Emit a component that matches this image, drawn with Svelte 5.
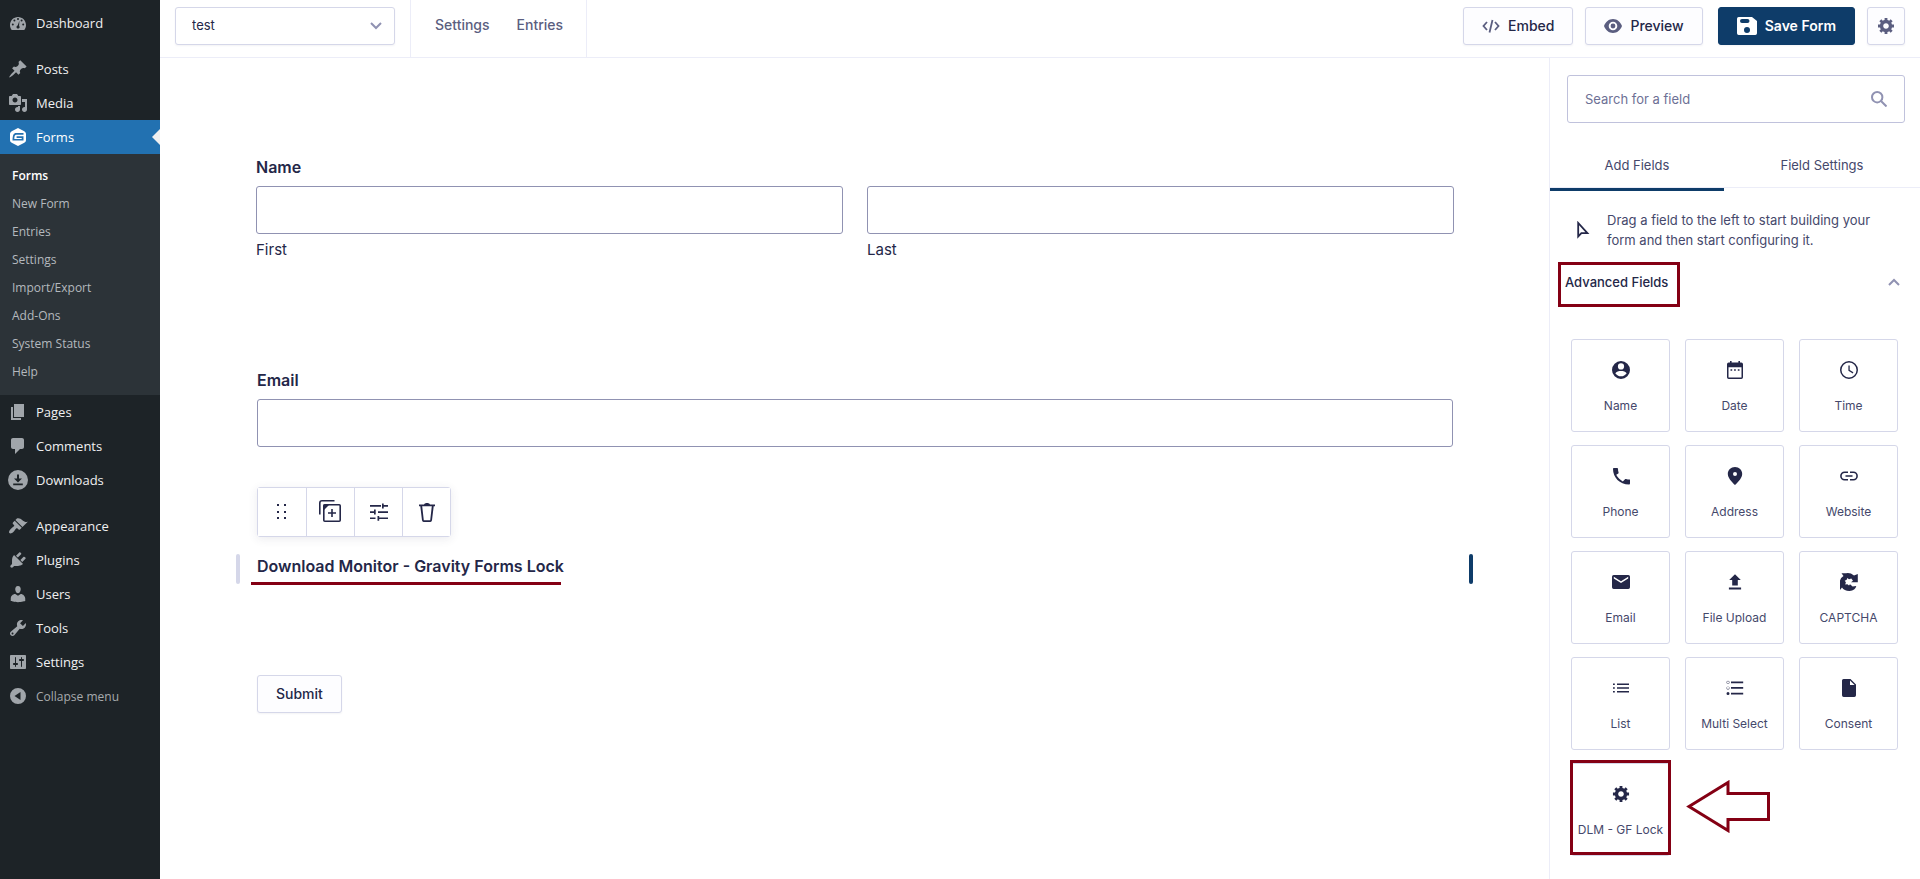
<script lang="ts">
  interface MenuItem {
    label: string;
    icon: string;
    current?: boolean;
    gapBefore?: boolean;
  }

  // 20x20 admin menu glyphs
  const menuIcons: Record<string, string> = {
    dashboard:
      'M3.76 17h12.48c1.1-1.37 1.76-3.11 1.76-5 0-4.42-3.58-8-8-8s-8 3.58-8 8c0 1.89.66 3.63 1.76 5zM10 5a1 1 0 110 2 1 1 0 010-2zM6.4 6.6a1 1 0 110 2 1 1 0 010-2zM13.6 6.6a1 1 0 110 2 1 1 0 010-2zM4.8 10.4a1 1 0 110 2 1 1 0 010-2zM15.2 10.4a1 1 0 110 2 1 1 0 010-2zM11.4 7.8l-.3 5.1c.5.4.7 1 .5 1.6-.3.9-1.200 1.300-2 1-.9-.3-1.300-1.200-1-2 .2-.5.600-.8 1.100-.9z',
    posts:
      'M10.44 3.02l1.82-1.82 6.36 6.35-1.83 1.82c-1.05-.68-2.48-.57-3.41.36l-.75.75c-.92.93-1.04 2.35-.35 3.41l-1.83 1.82-2.41-2.41-2.8 2.79c-.42.42-3.38 2.71-3.8 2.29s1.86-3.39 2.28-3.81l2.79-2.79L4.1 9.36l1.83-1.82c1.05.69 2.48.57 3.4-.36l.75-.75c.93-.92 1.05-2.35.36-3.41z',
    media:
      'M13 11V4c0-.55-.45-1-1-1h-1.67L9 1H5L3.67 3H2c-.55 0-1 .45-1 1v7c0 .55.45 1 1 1h10c.55 0 1-.45 1-1zM7 4.500c1.380 0 2.500 1.120 2.500 2.500S8.380 9.500 7 9.500 4.500 8.380 4.500 7 5.620 4.500 7 4.500zM14 6h5v10.500c0 1.380-1.120 2.500-2.500 2.500S14 17.880 14 16.500s1.120-2.500 2.500-2.500c.17 0 .34.02.5.05V9h-3V6zm-4 8.050V13h2v3.500c0 1.380-1.120 2.500-2.500 2.500S7 17.880 7 16.500 8.120 14 9.500 14c.17 0 .34.02.5.05z',
    forms:
      'M10 1l6.300 3.200q1.700 1 1.700 2.600v6.400q0 1.600-1.700 2.600L10 19l-6.300-3.200Q2 14.800 2 13.200V6.800q0-1.600 1.700-2.600zM15.500 6H8.200C5.400 6 4.700 8.300 4.500 13.500h11V9.200H8.600v1.700h5.100v1H6.300c.1-2.800.5-4.200 2.100-4.200h7.100z',
    pages: 'M6 15V2h10v13H6zm-1 1h8v2H3V5h2v11z',
    comments:
      'M5 2h9c1.100 0 2 .9 2 2v7c0 1.100-.9 2-2 2h-2l-5 5v-5H5c-1.100 0-2-.9-2-2V4c0-1.100.9-2 2-2z',
    downloads:
      'M10 0a10 10 0 110 20 10 10 0 010-20zM9 4.500v4H6l4 4 4-4h-3v-4zM5.200 13.500v1.700h9.600v-1.700z',
    appearance:
      'M14.480 11.060L7.410 3.990l1.500-1.500c.5-.56 2.300-.47 3.510.32 1.210.8 1.430 1.280 2.910 2.100 1.180.64 2.450 1.260 4.450.85zm-.71.71L6.700 4.700 4.930 6.470c-.39.39-.39 1.020 0 1.410l1.060 1.060c.39.39.39 1.030 0 1.420-.6.6-1.430 1.110-2.210 1.690-.35.26-.7.53-1.010.84C1.430 14.230.4 16.080 1.400 17.070c.99 1 2.840-.03 4.180-1.360.31-.31.58-.66.85-1.020.57-.78 1.080-1.610 1.690-2.210.39-.39 1.020-.39 1.410 0l1.060 1.060c.39.39 1.020.39 1.410 0z',
    plugins:
      'M13.110 4.360L9.870 7.600 8 5.730l3.240-3.240c.35-.34 1.050-.2 1.560.32.52.51.66 1.210.31 1.550zm-8 1.770l.91-1.120 9.010 9.010-1.190.84c-.71.71-2.630 1.160-3.820 1.160H6.140L4.900 17.260c-.59.59-1.540.59-2.120 0-.59-.58-.59-1.530 0-2.120l1.240-1.240v-3.880c0-1.130.4-3.190 1.090-3.890zm7.260 3.970l3.240-3.240c.34-.35 1.040-.21 1.550.31.52.51.66 1.210.31 1.550l-3.240 3.250z',
    users:
      'M10 9.250c-2.270 0-2.730-3.440-2.730-3.440C7 4.020 7.820 2 9.970 2c2.160 0 2.980 2.020 2.710 3.810 0 0-.41 3.440-2.680 3.440zm0 2.570L12.720 10c2.390 0 4.520 2.330 4.520 4.530v2.490s-3.650 1.130-7.240 1.130c-3.650 0-7.240-1.130-7.240-1.130v-2.490c0-2.250 1.940-4.480 4.470-4.480z',
    tools:
      'M16.680 9.770c-1.340 1.340-3.300 1.670-4.950.99l-5.410 6.520c-.99.99-2.590.99-3.580 0s-.99-2.590 0-3.570l6.520-5.420c-.68-1.650-.35-3.610.99-4.950 1.280-1.280 3.120-1.620 4.720-1.060l-2.890 2.890 2.820 2.820 2.860-2.870c.53 1.580.18 3.390-1.080 4.650zM3.810 16.210c.4.39 1.040.39 1.430 0 .4-.4.4-1.040 0-1.430-.39-.4-1.030-.4-1.430 0-.39.39-.39 1.030 0 1.430z',
    settings:
      'M18 16V4c0-.55-.45-1-1-1H3c-.55 0-1 .45-1 1v12c0 .55.45 1 1 1h14c.55 0 1-.45 1-1zM8 11h1c.55 0 1 .45 1 1s-.45 1-1 1H8v1.500c0 .28-.22.5-.5.5s-.5-.22-.5-.5V13H6c-.55 0-1-.45-1-1s.45-1 1-1h1V5.500c0-.28.22-.5.5-.5s.5.22.5.5V11zm5-2h-1c-.55 0-1-.45-1-1s.45-1 1-1h1V5.500c0-.28.22-.5.5-.5s.5.22.5.5V7h1c.55 0 1 .45 1 1s-.45 1-1 1h-1v5.500c0 .28-.22.5-.5.5s-.5-.22-.5-.5V9z',
    collapse: 'M10 2a8 8 0 110 16 8 8 0 010-16zM12.500 6v8L6.500 10z'
  };

  const menu: MenuItem[] = [
    { label: 'Dashboard', icon: 'dashboard' },
    { label: 'Posts', icon: 'posts', gapBefore: true },
    { label: 'Media', icon: 'media' },
    { label: 'Forms', icon: 'forms', current: true },
    { label: 'Pages', icon: 'pages' },
    { label: 'Comments', icon: 'comments' },
    { label: 'Downloads', icon: 'downloads' },
    { label: 'Appearance', icon: 'appearance', gapBefore: true },
    { label: 'Plugins', icon: 'plugins' },
    { label: 'Users', icon: 'users' },
    { label: 'Tools', icon: 'tools' },
    { label: 'Settings', icon: 'settings' }
  ];

  const submenu = [
    'Forms',
    'New Form',
    'Entries',
    'Settings',
    'Import/Export',
    'Add-Ons',
    'System Status',
    'Help'
  ];

  const gear =
    'M18 12h-2.180c-.17.7-.44 1.350-.81 1.930l1.540 1.540-2.100 2.100-1.540-1.540c-.58.36-1.230.63-1.910.79V19H8v-2.180c-.68-.16-1.330-.43-1.910-.79l-1.540 1.540-2.120-2.120 1.540-1.540c-.36-.58-.63-1.230-.79-1.910H1V9.030h2.170c.16-.7.44-1.350.8-1.940L2.430 5.550l2.100-2.100 1.540 1.540c.58-.37 1.240-.64 1.930-.81V2h3v2.180c.68.16 1.330.43 1.910.79l1.540-1.540 2.120 2.120-1.540 1.540c.36.59.64 1.240.8 1.940H18V12zm-8.500 1.500c1.660 0 3-1.340 3-3s-1.340-3-3-3-3 1.340-3 3 1.340 3 3 3z';

  // 18x18 field type glyphs
  const fieldTypes = [
    {
      label: 'Name',
      icon: 'M9 0a9 9 0 110 18A9 9 0 019 0zM9 2.300a3.100 3.100 0 100 6.200 3.100 3.100 0 000-6.200zM3.300 12.200C4.700 14.300 6.700 15.300 9 15.300s4.300-1 5.700-3.100C13.600 10.600 11.300 10 9 10s-4.600.6-5.700 2.200z'
    },
    {
      label: 'Date',
      icon: 'M4 0h1.600v1.500h6.800V0H14v1.500h1.300q1.700 0 1.700 1.700v13q0 1.800-1.700 1.800H2.700Q1 18 1 16.200v-13q0-1.700 1.700-1.700H4zM2.500 6.200v10.300h13V6.200zM4.500 8.200h1.700v1.600H4.500zM8.100 8.200h1.700v1.600H8.100zM11.800 8.200h1.700v1.600h-1.700z'
    },
    {
      label: 'Time',
      icon: 'M9 0a9 9 0 110 18A9 9 0 019 0zM9 1.500a7.500 7.500 0 100 15 7.500 7.500 0 000-15zM8.400 4.500h1.300v4.600l3.700 2.200-.6 1.100-4.400-2.600z'
    },
    {
      label: 'Phone',
      icon: 'M4.220 7.790c1.440 2.830 3.760 5.140 6.590 6.590l2.200-2.200c.27-.27.67-.36 1.020-.24 1.120.37 2.330.57 3.570.57.4 0 .4.450.4 1v2.990c0 .5-.45 1-1 1C7.600 17.500 1 10.400 1 2c0-.55.450-1 1-1h3c.550 0 1 .450 1 1 0 1.250.2 2.450.57 3.570.11.350.03.740-.25 1.020z'
    },
    {
      label: 'Address',
      icon: 'M9 0C4.900 0 1.800 3.100 1.800 7c0 4.900 7.200 11 7.200 11s7.200-6.100 7.200-11c0-3.900-3.100-7-7.200-7zM9 5a2 2 0 110 4 2 2 0 010-4z'
    },
    {
      label: 'Website',
      icon: 'M1.700 9c0-1.600 1.300-2.900 2.900-2.900H8V4.500H4.600a4.500 4.500 0 000 9H8v-1.600H4.600A2.900 2.900 0 011.700 9zM5.500 9.800h7V8.200h-7zM13.400 4.500H10v1.600h3.400a2.900 2.900 0 010 5.800H10v1.600h3.400a4.500 4.500 0 000-9z'
    },
    {
      label: 'Email',
      icon: 'M1.700 2h14.600Q18 2 18 3.700v10.600q0 1.700-1.700 1.700H1.700Q0 16 0 14.300V3.700Q0 2 1.700 2zM16.200 3.800L9 8.300 1.800 3.800v1.800L9 10.100l7.200-4.500z'
    },
    { label: 'File Upload', icon: 'M6.200 12.500V7H3.200L9 1.300 14.800 7h-3v5.500zM2.900 14.500h12.200v1.900H2.900z' },
    {
      label: 'CAPTCHA',
      icon: 'M1.500.3H6Q10-.6 14 2.400L17.800 1V9.300H11l2-1.600-1.700-2.200-2.300.8-1.700-1.300-.6 1.800-2 1 1.200 1.500-.7 2.200 2.200-.3 1.600 1.400 1-1.400 2.600 2.200 3.700-.4q-1 4.600-6.800 5Q4 17.800 2 14.500L0 17V7.500Q.5 4.500 3.500 3z'
    },
    {
      label: 'List',
      icon: 'M1 4.500h1.800v1.600H1zM1 8.200h1.800v1.600H1zM1 12h1.800v1.600H1zM5 4.500h12v1.600H5zM5 8.200h12v1.600H5zM5 12h12v1.600H5z'
    },
    {
      label: 'Multi Select',
      icon: 'M5 2.500h12.200v1.700H5zM5 8.100h12.200v1.700H5zM5 13.700h12.200v1.700H5zM2 1.800a1.500 1.500 0 110 3 1.500 1.500 0 010-3zM2 2.200a1.100 1.100 0 100 2.200 1.100 1.100 0 000-2.200zM2 7.400a1.500 1.500 0 110 3 1.500 1.500 0 010-3zM2 7.800a1.100 1.100 0 100 2.200 1.100 1.100 0 000-2.200zM2 13a1.500 1.500 0 110 3 1.500 1.500 0 010-3z'
    },
    {
      label: 'Consent',
      icon: 'M3.500 0h7l5.500 5.500v10.800q0 1.700-1.700 1.700H3.700Q2 18 2 16.300V1.600Q2 0 3.500 0zM10 1.400V6h4.600z'
    }
  ];

  let formName = $state('test');
  let search = $state('');
  let activeTab = $state('add');
  let advancedOpen = $state(true);
</script>

<div class="admin">
  <nav class="admin-menu" aria-label="Main menu">
    {#each menu as item}
      <a href="#{item.icon}" class="menu-item" class:current={item.current} class:gap-before={item.gapBefore}>
        <svg viewBox="0 0 20 20" width="20" height="20"><path fill-rule="evenodd" d={menuIcons[item.icon]} /></svg>
        {item.label}
      </a>
      {#if item.current}
        <div class="submenu">
          {#each submenu as sub, i}
            <a href="#sub-{i}" class:active={i === 0}>{sub}</a>
          {/each}
        </div>
      {/if}
    {/each}
    <button class="menu-item collapse">
      <svg viewBox="0 0 20 20" width="20" height="20"><path fill-rule="evenodd" d={menuIcons.collapse} /></svg>
      Collapse menu
    </button>
  </nav>

  <div class="editor">
    <header class="toolbar">
      <div class="form-switcher">
        <select bind:value={formName} aria-label="Switch form">
          <option value="test">test</option>
        </select>
        <svg viewBox="0 0 12 8" width="12" height="8"><path d="M1 1l5 5 5-5" /></svg>
      </div>
      <div class="toolbar-links">
        <a href="#form-settings">Settings</a>
        <a href="#form-entries">Entries</a>
      </div>
      <div class="toolbar-actions">
        <button class="btn embed">
          <svg viewBox="0 0 18 14" width="18" height="14">
            <path d="M5 3L1.500 7 5 11M13 3l3.500 4L13 11M10.500 1l-3 12.500" fill="none" stroke="currentColor" stroke-width="1.800" />
          </svg>
          Embed
        </button>
        <button class="btn preview">
          <svg viewBox="0 0 18 14" width="18" height="14">
            <path fill-rule="evenodd" d="M9 0C5 0 1.500 2.800 0 7c1.500 4.200 5 7 9 7s7.500-2.800 9-7c-1.500-4.200-5-7-9-7zM9 2.700a4.300 4.300 0 110 8.600 4.300 4.300 0 010-8.600zM9 4.600a2.400 2.400 0 100 4.800 2.400 2.400 0 000-4.800z" />
          </svg>
          Preview
        </button>
        <button class="btn save">
          <svg viewBox="0 0 20 18" width="20" height="18">
            <path fill-rule="evenodd" d="M1.700 0H15l5 4v12.300Q20 18 18.300 18H1.700Q0 18 0 16.300V1.700Q0 0 1.700 0zM5 2a2 2 0 000 4h5.500a2 2 0 000-4zM10 10a3 3 0 100 6 3 3 0 000-6z" />
          </svg>
          Save Form
        </button>
        <button class="btn options" aria-label="Editor preferences">
          <svg viewBox="1 2 17 17" width="16" height="16"><path d={gear} /></svg>
        </button>
      </div>
    </header>

    <div class="workspace">
      <main class="canvas">
        <fieldset class="field name-field">
          <legend>Name</legend>
          <div class="name-columns">
            <div>
              <input id="name-first" type="text" />
              <label class="sub-label" for="name-first">First</label>
            </div>
            <div>
              <input id="name-last" type="text" />
              <label class="sub-label" for="name-last">Last</label>
            </div>
          </div>
        </fieldset>

        <div class="field inset email-field">
          <label class="field-label" for="email">Email</label>
          <input id="email" type="text" />
        </div>

        <div class="inset">
          <div class="field-tools">
            <button aria-label="Move">
              <svg viewBox="0 0 10 16" width="10" height="16">
                <path d="M0 0h2v2H0zM7 0h2v2H7zM0 7h2v2H0zM7 7h2v2H7zM0 13h2v2H0zM7 13h2v2H7z" />
              </svg>
            </button>
            <button aria-label="Duplicate">
              <svg viewBox="1 1 22 22" width="22" height="22">
                <g fill="none" stroke="currentColor" stroke-width="1.600">
                  <rect x="4.800" y="4.800" width="16.400" height="16.400" rx="1" />
                  <path d="M.8 14.500V3Q.8.8 3 .8h12.500M13 9v8M9 13h8" />
                </g>
                <path d="M4.500 4.500h6l-6 6z" />
              </svg>
            </button>
            <button aria-label="Settings">
              <svg viewBox="0 0 18 18" width="18" height="18">
                <path d="M0 2h11v1.700H0zM12 .5h1.700v1.500H18v1.700h-4.300v1.800H12zM0 8.200h4V6.500h1.700v5H4V9.900H0zM8 8.200h10v1.700H8zM0 14.400h5.500v1.700H0zM7.500 13h1.700v1.400H18v1.700H9.200v1.700H7.500z" />
              </svg>
            </button>
            <button aria-label="Delete">
              <svg viewBox="0 0 18 19" width="18" height="19">
                <path fill-rule="evenodd" d="M6 1.500C6.500.5 7.500 0 9 0s2.500.5 3 1.500h5v1.800h-1.300L14 17.200Q13.800 19 12.300 19H5.700Q4.200 19 4 17.200L2.300 3.300H1V1.500zM4.200 3.300l1.600 13.900h6.400l1.600-13.900z" />
              </svg>
            </button>
          </div>
        </div>

        <div class="selected-field">
          <span class="handle"></span>
          <h3>Download Monitor - Gravity Forms Lock</h3>
          <span class="handle resize"></span>
        </div>

        <div class="inset">
          <button class="btn submit">Submit</button>
        </div>
      </main>

      <aside class="panel">
        <div class="search">
          <input type="text" bind:value={search} placeholder="Search for a field" aria-label="Search for a field" />
          <svg viewBox="0 0 16 16" width="16" height="16">
            <path d="M10.500 10.500l5 5M6.200 1a5.200 5.200 0 110 10.400A5.200 5.200 0 016.200 1z" />
          </svg>
        </div>

        <div class="tabs" role="tablist">
          <button role="tab" aria-selected={activeTab === 'add'} class:active={activeTab === 'add'} onclick={() => (activeTab = 'add')}>
            Add Fields
          </button>
          <button role="tab" aria-selected={activeTab === 'settings'} class:active={activeTab === 'settings'} onclick={() => (activeTab = 'settings')}>
            Field Settings
          </button>
        </div>

        <div class="hint">
          <svg viewBox="0 0 13 18" width="13" height="18">
            <path d="M1.200 2v13.500l3.200-3.300h6z" fill="none" stroke="currentColor" stroke-width="1.800" />
          </svg>
          <p>Drag a field to the left to start building your form and then start configuring it.</p>
        </div>

        <button class="group-title" aria-expanded={advancedOpen} onclick={() => (advancedOpen = !advancedOpen)}>
          <span class="marked">Advanced Fields</span>
          <svg viewBox="0 0 12 8" width="12" height="8"><path d="M1 7l5-5 5 5" /></svg>
        </button>

        {#if advancedOpen}
          <div class="field-grid">
            {#each fieldTypes as type}
              <button class="field-type">
                <svg viewBox="0 0 18 18" width="18" height="18"><path fill-rule="evenodd" d={type.icon} /></svg>
                {type.label}
              </button>
            {/each}
            <button class="field-type marked">
              <svg viewBox="0 1 19 19" width="18" height="18"><path d={gear} /></svg>
              DLM - GF Lock
            </button>
            <svg class="arrow" viewBox="0 0 84 53" width="84" height="53">
              <path d="M3 26.500L42 2.500v11h40.500v26H42v11z" />
            </svg>
          </div>
        {/if}
      </aside>
    </div>
  </div>
</div>

<style>
  :global(body) {
    margin: 0;
    background: #fff;
  }

  .admin {
    --ink: #242748;
    --muted: #5b5e80;
    --line: #ecedf8;
    --edge: #d5d7e9;
    --navy: #0e3c69;
    --mark: #840014;
    display: flex;
    min-height: 100vh;
    font-family: Inter, sans-serif;
    font-size: 14px;
    color: var(--ink);
  }

  .admin *,
  .admin *::after {
    box-sizing: border-box;
  }

  button,
  input,
  select {
    font: inherit;
    color: inherit;
    margin: 0;
  }

  button {
    cursor: pointer;
  }

  a {
    text-decoration: none;
  }

  svg {
    flex: none;
    fill: currentColor;
  }

  /* admin menu */
  .admin-menu {
    flex: 0 0 160px;
    padding-top: 6px;
    background: #1d2327;
    font-family: 'Open Sans', sans-serif;
    font-size: 13px;
  }

  .menu-item {
    position: relative;
    display: flex;
    align-items: center;
    gap: 8px;
    width: 100%;
    height: 34px;
    padding: 0 8px;
    border: 0;
    background: none;
    color: #f0f0f1;
  }

  .menu-item svg {
    color: #a0a5aa;
  }

  .menu-item.gap-before {
    margin-top: 12px;
  }

  .menu-item.current {
    background: #2271b1;
    color: #fff;
  }

  .menu-item.current svg {
    color: #fff;
  }

  .menu-item.current::after {
    content: '';
    position: absolute;
    right: 0;
    top: 9px;
    border: 8px solid transparent;
    border-left: 0;
    border-right-color: #f0f0f1;
  }

  .menu-item.collapse {
    color: #a7aaad;
    font-size: 12px;
  }

  .submenu {
    display: flex;
    flex-direction: column;
    padding: 8px 0 9px;
    background: #2c3338;
    font-size: 12px;
    line-height: 28px;
  }

  .submenu a {
    padding: 0 12px;
    color: #b4b9be;
  }

  .submenu a.active {
    color: #fff;
    font-weight: 600;
  }

  /* top toolbar */
  .editor {
    flex: 1;
    min-width: 0;
    display: flex;
    flex-direction: column;
  }

  .toolbar {
    display: flex;
    height: 58px;
    border-bottom: 1px solid var(--line);
  }

  .form-switcher {
    position: relative;
    padding: 7px 15px 0;
  }

  .form-switcher select {
    width: 220px;
    height: 38px;
    padding: 0 16px 2px;
    border: 1px solid var(--edge);
    border-radius: 3px;
    background: #fff;
    font-size: 13px;
    appearance: none;
    box-shadow: 0 1px 2px rgba(58, 58, 87, 0.06);
  }

  .form-switcher svg {
    position: absolute;
    right: 28px;
    top: 22px;
    pointer-events: none;
  }

  .form-switcher path,
  .group-title path {
    fill: none;
    stroke: #9092b2;
    stroke-width: 2;
  }

  .toolbar-links {
    display: flex;
    gap: 27px;
    padding: 0 23px 0 24px;
    border: solid var(--line);
    border-width: 0 1px;
    line-height: 50px;
    font-weight: 500;
  }

  .toolbar-links a {
    color: var(--muted);
  }

  .toolbar-actions {
    display: flex;
    gap: 12px;
    margin-left: auto;
    padding: 7px 15px 0 0;
  }

  .btn {
    display: flex;
    align-items: center;
    justify-content: center;
    gap: 8px;
    height: 38px;
    padding: 0 18px;
    border: 1px solid var(--edge);
    border-radius: 3px;
    background: #fdfdff;
    font-size: 14px;
    font-weight: 500;
    line-height: 20px;
    box-shadow: 0 1px 2px rgba(58, 58, 87, 0.06);
  }

  .btn svg {
    color: var(--muted);
  }

  .btn.save {
    margin-left: 3px;
    border-color: var(--navy);
    background: var(--navy);
    color: #fff;
    font-weight: 600;
  }

  .btn.save svg {
    color: #fff;
  }

  .btn.options {
    width: 38px;
    padding: 0;
  }

  /* form canvas */
  .workspace {
    flex: 1;
    display: flex;
  }

  .canvas {
    flex: 1;
    min-width: 0;
    padding: 99px 95px 0 96px;
    font-size: 15px;
    line-height: 20px;
  }

  .inset {
    padding: 0 1px;
  }

  .name-field {
    margin: 0;
    padding: 0;
    border: 0;
  }

  .field legend,
  .field-label,
  .selected-field h3 {
    display: block;
    margin: 0;
    padding: 0;
    font-size: 16px;
    font-weight: 600;
  }

  .name-columns {
    display: grid;
    grid-template-columns: 1fr 1fr;
    gap: 24px;
  }

  .field input {
    display: block;
    width: 100%;
    height: 48px;
    margin-top: 9px;
    padding: 0 12px;
    border: 1px solid #9092b2;
    border-radius: 3px;
    background: #fff;
  }

  .sub-label {
    display: block;
    margin-top: 6px;
  }

  .email-field {
    margin: 110px 0 40px;
  }

  .field-tools {
    display: inline-flex;
    vertical-align: top;
    height: 50px;
    border: 1px solid var(--edge);
    border-radius: 3px;
    box-shadow: 0 2px 10px rgba(58, 58, 87, 0.1);
  }

  .field-tools button {
    display: flex;
    align-items: center;
    justify-content: center;
    width: 48px;
    padding: 0;
    border: 0;
    background: #fff;
  }

  .field-tools svg {
    overflow: visible;
  }

  .field-tools button + button {
    border-left: 1px solid var(--edge);
  }

  .selected-field {
    display: flex;
    justify-content: space-between;
    margin: 17px -19px 91px -20px;
  }

  .selected-field h3 {
    position: relative;
    flex: 1;
    padding: 2px 0 0 17px;
  }

  .selected-field h3::after {
    content: '';
    position: absolute;
    left: 11px;
    bottom: -1px;
    width: 310px;
    height: 3px;
    background: var(--mark);
  }

  .handle {
    width: 4px;
    height: 30px;
    border-radius: 2px;
    background: var(--edge);
  }

  .handle.resize {
    background: var(--navy);
  }

  /* right panel */
  .panel {
    flex: 0 0 371px;
    border-left: 1px solid var(--line);
    font-size: 13px;
    line-height: 20px;
  }

  .search {
    position: relative;
    padding: 17px 15px 0 17px;
  }

  .search input {
    display: block;
    width: 100%;
    height: 48px;
    padding: 0 48px 0 17px;
    border: 1px solid #c0c2dc;
    border-radius: 3px;
    background: #fff;
  }

  .search input::placeholder {
    color: #6d7095;
    opacity: 1;
  }

  .search svg {
    position: absolute;
    right: 33px;
    top: 33px;
    fill: none;
    stroke: #9092b2;
    stroke-width: 2;
  }

  .tabs {
    display: grid;
    grid-template-columns: 47fr 53fr;
    margin-top: 19px;
  }

  .tabs button {
    height: 49px;
    padding: 0;
    border: 0;
    border-bottom: 3px solid transparent;
    background: linear-gradient(var(--line), var(--line)) 0 100% / 100% 1px no-repeat;
    color: #45486b;
  }

  .tabs button.active {
    border-bottom-color: var(--navy);
  }

  .hint {
    display: flex;
    align-items: center;
    gap: 17px;
    padding: 19px 27px 0;
    color: #45486b;
  }

  .hint svg {
    color: var(--ink);
  }

  .hint p {
    margin: 0;
  }

  .group-title {
    display: flex;
    align-items: center;
    justify-content: space-between;
    width: 100%;
    margin-top: 12px;
    padding: 0 20px 0 8px;
    border: 0;
    background: none;
    font-weight: 500;
  }

  .group-title .marked {
    padding: 7px 9px 12px 4px;
    border: 3px solid var(--mark);
  }

  .group-title svg {
    margin-bottom: 5px;
  }

  .field-grid {
    display: grid;
    grid-template-columns: repeat(3, 1fr);
    gap: 13px 15px;
    padding: 32px 22px 23px 21px;
  }

  .field-type {
    position: relative;
    display: flex;
    flex-direction: column;
    align-items: center;
    gap: 17px;
    height: 93px;
    padding: 21px 0 0;
    border: 1px solid var(--edge);
    border-radius: 3px;
    background: #fff;
    color: #45486b;
    font-size: 12px;
    line-height: 20px;
    white-space: nowrap;
  }

  .field-type svg {
    color: var(--ink);
  }

  .field-type.marked::after {
    content: '';
    position: absolute;
    inset: -4px -2px 0;
    border: 3px solid var(--mark);
  }

  .arrow {
    align-self: center;
    margin: 0 0 6px 1px;
    fill: none;
    stroke: var(--mark);
    stroke-width: 3;
  }
</style>
